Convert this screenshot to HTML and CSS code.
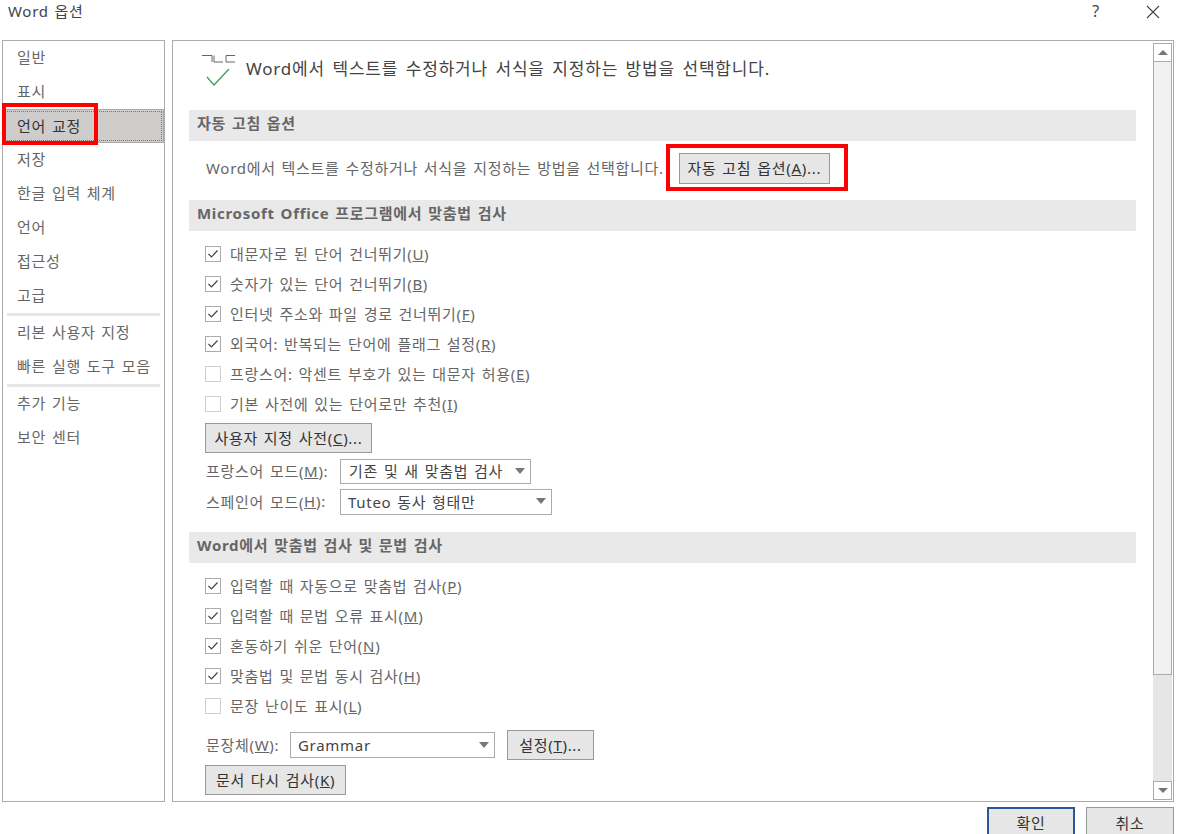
FILE: index.html
```html
<!DOCTYPE html>
<html lang="ko">
<head>
<meta charset="utf-8">
<title>Word 옵션</title>
<link rel="stylesheet" href="styles.css">
</head>
<body>
<div class="dialog">
  <header class="titlebar">
    <span class="title">Word 옵션</span>
    <span class="title-actions">
      <span class="help">?</span>
      <svg class="close" width="14" height="14" viewBox="0 0 14 14"><path d="M1 1L13 13M13 1L1 13" stroke="#444" stroke-width="1.1" fill="none"/></svg>
    </span>
  </header>
  <div class="main">
    <nav class="nav">
      <div class="nav-item">일반</div>
      <div class="nav-item">표시</div>
      <div class="nav-item selected"><span class="selected-inner">언어 교정</span></div>
      <div class="nav-item">저장</div>
      <div class="nav-item">한글 입력 체계</div>
      <div class="nav-item">언어</div>
      <div class="nav-item">접근성</div>
      <div class="nav-item">고급</div>
      <div class="nav-sep"></div>
      <div class="nav-item">리본 사용자 지정</div>
      <div class="nav-item">빠른 실행 도구 모음</div>
      <div class="nav-sep"></div>
      <div class="nav-item">추가 기능</div>
      <div class="nav-item">보안 센터</div>
      <div class="mark mark-nav"></div>
    </nav>
    <section class="panel">
      <div class="content">
        <div class="intro">
          <svg width="34" height="36" viewBox="0 0 34 36" class="intro-icon">
            <path d="M0 2.5H10V9M12 2.5V9H21M33 2.5H24V9H33" stroke="#666" stroke-width="1" fill="none"/>
            <path d="M5 24L12 32L27 16" stroke="#3f9e5a" stroke-width="1.3" fill="none"/>
          </svg>
          <span class="intro-text">Word에서 텍스트를 수정하거나 서식을 지정하는 방법을 선택합니다.</span>
        </div>
        <h2 class="sec sec-first">자동 고침 옵션</h2>
        <div class="autocorrect">
          <span class="auto-text">Word에서 텍스트를 수정하거나 서식을 지정하는 방법을 선택합니다.</span>
          <button class="btn btn-auto">자동 고침 옵션(<u>A</u>)...</button>
          <div class="mark mark-btn"></div>
        </div>
        <h2 class="sec">Microsoft Office 프로그램에서 맞춤법 검사</h2>
        <div class="checks">
          <label class="check"><span class="box on"><svg width="12" height="10" viewBox="0 0 12 10"><path d="M1.5 5L4.5 8L10.5 1.5" stroke="#444" stroke-width="1.2" fill="none"/></svg></span><span class="check-text">대문자로 된 단어 건너뛰기(<u>U</u>)</span></label>
          <label class="check"><span class="box on"><svg width="12" height="10" viewBox="0 0 12 10"><path d="M1.5 5L4.5 8L10.5 1.5" stroke="#444" stroke-width="1.2" fill="none"/></svg></span><span class="check-text">숫자가 있는 단어 건너뛰기(<u>B</u>)</span></label>
          <label class="check"><span class="box on"><svg width="12" height="10" viewBox="0 0 12 10"><path d="M1.5 5L4.5 8L10.5 1.5" stroke="#444" stroke-width="1.2" fill="none"/></svg></span><span class="check-text">인터넷 주소와 파일 경로 건너뛰기(<u>F</u>)</span></label>
          <label class="check"><span class="box on"><svg width="12" height="10" viewBox="0 0 12 10"><path d="M1.5 5L4.5 8L10.5 1.5" stroke="#444" stroke-width="1.2" fill="none"/></svg></span><span class="check-text">외국어: 반복되는 단어에 플래그 설정(<u>R</u>)</span></label>
          <label class="check"><span class="box"></span><span class="check-text">프랑스어: 악센트 부호가 있는 대문자 허용(<u>E</u>)</span></label>
          <label class="check"><span class="box"></span><span class="check-text">기본 사전에 있는 단어로만 추천(<u>I</u>)</span></label>
        </div>
        <button class="btn btn-dict">사용자 지정 사전(<u>C</u>)...</button>
        <div class="field field-fr">
          <span class="field-label">프랑스어 모드(<u>M</u>):</span>
          <div class="select sel-fr"><span>기존 및 새 맞춤법 검사</span><i class="caret"></i></div>
        </div>
        <div class="field field-es">
          <span class="field-label">스페인어 모드(<u>H</u>):</span>
          <div class="select sel-es"><span>Tuteo 동사 형태만</span><i class="caret"></i></div>
        </div>
        <h2 class="sec sec-word">Word에서 맞춤법 검사 및 문법 검사</h2>
        <div class="checks">
          <label class="check"><span class="box on"><svg width="12" height="10" viewBox="0 0 12 10"><path d="M1.5 5L4.5 8L10.5 1.5" stroke="#444" stroke-width="1.2" fill="none"/></svg></span><span class="check-text">입력할 때 자동으로 맞춤법 검사(<u>P</u>)</span></label>
          <label class="check"><span class="box on"><svg width="12" height="10" viewBox="0 0 12 10"><path d="M1.5 5L4.5 8L10.5 1.5" stroke="#444" stroke-width="1.2" fill="none"/></svg></span><span class="check-text">입력할 때 문법 오류 표시(<u>M</u>)</span></label>
          <label class="check"><span class="box on"><svg width="12" height="10" viewBox="0 0 12 10"><path d="M1.5 5L4.5 8L10.5 1.5" stroke="#444" stroke-width="1.2" fill="none"/></svg></span><span class="check-text">혼동하기 쉬운 단어(<u>N</u>)</span></label>
          <label class="check"><span class="box on"><svg width="12" height="10" viewBox="0 0 12 10"><path d="M1.5 5L4.5 8L10.5 1.5" stroke="#444" stroke-width="1.2" fill="none"/></svg></span><span class="check-text">맞춤법 및 문법 동시 검사(<u>H</u>)</span></label>
          <label class="check"><span class="box"></span><span class="check-text">문장 난이도 표시(<u>L</u>)</span></label>
        </div>
        <div class="style-row">
          <span class="style-label">문장체(<u>W</u>):</span>
          <div class="select sel-style"><span>Grammar</span><i class="caret"></i></div>
          <button class="btn btn-set">설정(<u>T</u>)...</button>
        </div>
        <button class="btn btn-recheck">문서 다시 검사(<u>K</u>)</button>
      </div>
      <div class="scrollbar">
        <div class="sb-btn"><i class="sb-up"></i></div>
        <div class="sb-thumb"></div>
        <div class="sb-track"></div>
        <div class="sb-btn"><i class="sb-down"></i></div>
      </div>
    </section>
  </div>
  <footer class="footer">
    <button class="btn btn-foot btn-ok">확인</button>
    <button class="btn btn-foot">취소</button>
  </footer>
</div>
</body>
</html>
```

FILE: styles.css
```css
* { box-sizing: border-box; }
html, body { margin: 0; padding: 0; background: #fff; }
body {
  width: 1181px;
  height: 834px;
  overflow: hidden;
  font-family: "Noto Sans", "Noto Sans CJK KR", sans-serif;
  font-size: 15px;
  letter-spacing: 0.7px;
  word-spacing: 1.3px;
  color: #444;
}
.dialog { display: flex; flex-direction: column; height: 834px; padding-left: 2px; }
.titlebar {
  height: 40px;
  flex: none;
  display: flex;
  justify-content: space-between;
  padding: 0 21px 0 6px;
}
.title { line-height: 22px; color: #444; }
.title-actions { display: flex; gap: 46px; align-items: flex-start; }
.help { font-size: 16px; line-height: 22px; }
.close { margin-top: 5px; }
.main { display: flex; gap: 7px; height: 762px; flex: none; }
.nav {
  width: 163px;
  border: 1px solid #ababab;
  position: relative;
  flex: none;
}
.nav-item {
  height: 34px;
  line-height: 33px;
  padding-left: 14px;
  color: #666;
  white-space: nowrap;
}
.selected {
  background: #cfcdcb;
  color: #333;
  padding: 1px;
  border: 1px solid #aaa;
}
.selected-inner {
  display: block;
  height: 30px;
  line-height: 28px;
  padding-left: 11px;
  border: 1px dotted #777;
}
.nav-sep { height: 3px; background: #e6e6e6; margin: 0 4px; }
.mark { position: absolute; border: 4px solid #f00; pointer-events: none; }
.mark-nav { left: -1px; top: 62px; width: 96px; height: 42px; }
.panel {
  width: 1002px;
  border: 1px solid #ababab;
  display: flex;
  flex: none;
  overflow: hidden;
}
.content { width: 980px; flex: none; padding-left: 16px; }
.intro { height: 69px; display: flex; align-items: flex-start; padding: 12px 0 0 13px; gap: 10px; }
.intro-text {
  font-size: 17px;
  letter-spacing: 0.8px;
  word-spacing: 2.3px;
  line-height: 32px;
  color: #444;
  white-space: nowrap;
}
.sec {
  margin: 0;
  height: 31px;
  line-height: 27px;
  width: 947px;
  background: #e9e9e9;
  font-size: 15px;
  font-weight: 700;
  color: #666;
  padding-left: 8px;
}
.autocorrect {
  height: 59px;
  padding: 0 0 5px 17px;
  display: flex;
  align-items: center;
  gap: 15px;
  color: #666;
  position: relative;
  white-space: nowrap;
}
.auto-text { padding-bottom: 2px; }
.mark-btn { left: 477px; top: 3px; width: 182px; height: 47px; }
.btn {
  display: block;
  font: inherit;
  letter-spacing: inherit;
  word-spacing: inherit;
  color: #333;
  background: #e6e6e6;
  border: 1px solid #999;
  padding: 0 0 2px;
  white-space: nowrap;
}
.btn-auto { width: 151px; height: 31px; flex: none; }
.checks { padding: 8px 0 0 16px; }
.check { display: flex; align-items: center; height: 30px; gap: 9px; color: #666; white-space: nowrap; }
.check-text { padding-bottom: 2px; }
.box {
  width: 16px;
  height: 16px;
  border: 1px solid #cfcfcf;
  display: flex;
  align-items: center;
  justify-content: center;
  flex: none;
}
.box.on { border-color: #ababab; }
.btn-dict { width: 167px; height: 30px; margin: 4px 0 0 16px; }
.field { display: flex; align-items: stretch; padding-left: 17px; color: #666; }
.field-label { width: 134px; flex: none; color: #666; white-space: nowrap; display: flex; align-items: center; padding-bottom: 2px; }
.field-fr { margin-top: 6px; height: 25px; }
.field-es { margin-top: 5px; height: 26px; }
.select {
  border: 1px solid #ababab;
  display: flex;
  align-items: center;
  justify-content: space-between;
  color: #444;
  background: #fff;
  padding: 0 5px 2px 8px;
  white-space: nowrap;
  flex: none;
}
.sel-fr { width: 191px; }
.sel-es { width: 212px; padding-left: 7px; }
.caret {
  width: 0;
  height: 0;
  border: 5px solid transparent;
  border-top: 6px solid #777;
  border-bottom: 0;
}
.sec-word { margin-top: 17px; }
.style-row { display: flex; align-items: center; height: 30px; margin: 9px 0 0 17px; color: #666; white-space: nowrap; }
.style-label { width: 84px; flex: none; padding-bottom: 1px; }
.sel-style { width: 205px; height: 26px; padding: 0 5px 0 7px; }
.btn-set { width: 87px; height: 30px; margin-left: 12px; }
.btn-recheck { width: 141px; height: 30px; margin: 5px 0 0 16px; }
.scrollbar {
  width: 19px;
  flex: none;
  margin: 2px 1px 1px 0;
  display: flex;
  flex-direction: column;
  background: #e6e6e6;
}
.sb-btn {
  height: 19px;
  flex: none;
  border: 1px solid #ababab;
  background: #fff;
  display: flex;
  align-items: center;
  justify-content: center;
}
.sb-up, .sb-down { width: 0; height: 0; border: 5px solid transparent; }
.sb-up { border-bottom: 5px solid #777; border-top: 0; }
.sb-down { border-top: 5px solid #777; border-bottom: 0; }
.sb-thumb { height: 613px; flex: none; background: #f1f1f1; border: 1px solid #ababab; border-top: 0; }
.sb-track { flex: 1; }
.footer { display: flex; justify-content: flex-end; gap: 11px; padding: 5px 7px 0 0; }
.btn-foot { width: 88px; height: 32px; flex: none; background: #e6e6e6; }
.btn-ok { border: 2px solid #2b579a; }
```
